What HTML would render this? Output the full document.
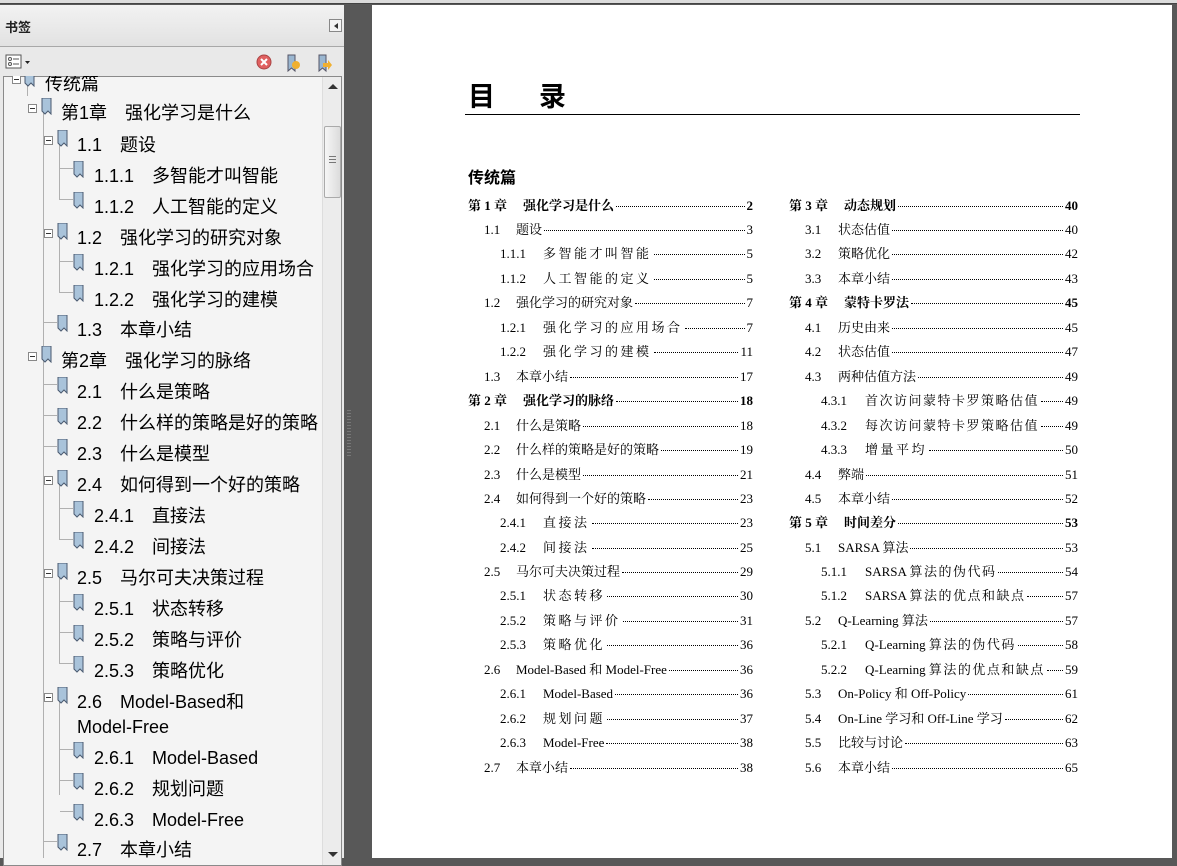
<!DOCTYPE html>
<html><head><meta charset="utf-8"><style>
*{margin:0;padding:0;box-sizing:border-box}
body{width:1177px;height:858px;overflow:hidden;background:#585858;position:relative;font-family:"Liberation Sans","Noto Sans CJK SC",sans-serif}
#top{position:absolute;left:0;top:0;width:1177px;height:4px;background:#dcdcdc;border-bottom:1px solid #444}
#panel{position:absolute;left:0;top:5px;width:344px;height:853px;background:#e9e9e9}
#hdr{position:absolute;left:0;top:0;width:344px;height:42px;background:linear-gradient(#f2f2f2,#e2e2e2);border-bottom:1px solid #a8a8a8}
#hdr b{position:absolute;left:5px;top:12px;font-size:13px;color:#222;font-family:"Noto Sans CJK SC",sans-serif}
#coll{position:absolute;left:329px;top:14px;width:13px;height:13px;border:1px solid #888;background:#f4f4f4}
#coll:after{content:"";position:absolute;left:4px;top:3px;border-right:4px solid #333;border-top:3px solid transparent;border-bottom:3px solid transparent}
#tree{position:absolute;left:3px;top:71px;width:339px;height:790px;background:#f4f4f4;border:1px solid #8a8a8a;overflow:hidden}
#sb{position:absolute;right:0;top:0;width:19px;height:100%;background:#ececec;border-left:1px solid #ddd}
#thumb{position:absolute;left:1px;top:49px;width:17px;height:72px;background:linear-gradient(90deg,#f6f6f6,#dcdcdc);border:1px solid #aaa;border-radius:2px}
.it{position:absolute;font-size:18px;color:#000;white-space:nowrap;line-height:24px}
.bm{position:absolute;width:11px;height:17px}
.mn{position:absolute;width:9px;height:9px;border:1px solid #888;background:#fff}
.mn:after{content:"";position:absolute;left:1px;top:3px;width:5px;height:1px;background:#333}
.vl{position:absolute;width:1px;background:#b0b0b0}
.hl{position:absolute;height:1px;background:#b0b0b0}
#gap{position:absolute;left:344px;top:5px;width:28px;height:853px;background:#585858}
#page{position:absolute;left:372px;top:5px;width:800px;height:853px;background:#fff}
.r{position:absolute;display:flex;align-items:baseline;font-family:"Liberation Serif","Noto Serif CJK SC",serif;font-size:13px;color:#000;white-space:nowrap;line-height:18px}
.r .d{flex:1;border-bottom:1px dotted #000;margin:0 2px;height:1px;position:relative;top:-3px}
.r .n{display:inline-block}
.ch{font-weight:bold}
.ss .t{letter-spacing:2.5px}
</style></head><body>
<div id="top"></div>
<div id="panel">
<div id="hdr"><b>书签</b><div id="coll"></div></div>
<svg style="position:absolute;left:5px;top:49px" width="28" height="16"><rect x="1" y="1" width="15" height="13" fill="#fff" stroke="#555"/><circle cx="5" cy="5" r="1.5" fill="none" stroke="#555"/><circle cx="5" cy="10" r="1.5" fill="none" stroke="#555"/><path d="M8 5h6M8 10h6" stroke="#555"/><path d="M20 7h5l-2.5 3z" fill="#222"/></svg>
<svg style="position:absolute;left:256px;top:48px" width="80" height="20"><circle cx="8" cy="9" r="7" fill="#e06060" stroke="#a44"/><path d="M5 6l6 6M11 6l-6 6" stroke="#fff" stroke-width="2"/><path d="M32 2h7v16l-3.5-3-3.5 3z" fill="#9ab6d0" stroke="#556"/><circle cx="40" cy="12" r="4" fill="#f0b030"/><path d="M63 2h7v16l-3.5-3-3.5 3z" fill="#9ab6d0" stroke="#556"/><path d="M67 10h5v-3l4 5-4 5v-3h-5z" fill="#f0b030"/></svg>
<div id="tree">
<div id="sb"><div style="position:absolute;left:5px;top:7px;border-bottom:5px solid #333;border-left:5px solid transparent;border-right:5px solid transparent"></div><div id="thumb"><div style="position:absolute;left:4px;top:29px;width:7px;height:7px;border-top:1px solid #777;border-bottom:1px solid #777"></div><div style="position:absolute;left:4px;top:32px;width:7px;height:1px;background:#777"></div></div><div style="position:absolute;left:5px;bottom:8px;border-top:5px solid #333;border-left:5px solid transparent;border-right:5px solid transparent"></div></div>
</div>
</div>
<div id="gap"><div style="position:absolute;left:3px;top:405px;width:4px;height:48px;background:repeating-linear-gradient(#777 0 1px,#585858 1px 3px)"></div></div>
<div id="page">
<div style="position:absolute;left:96px;top:70px;font-size:27px;font-weight:bold;font-family:'Noto Sans CJK SC',sans-serif;letter-spacing:44px">目录</div>
<div style="position:absolute;left:93px;top:109px;width:615px;height:1px;background:#000"></div>
<div style="position:absolute;left:96px;top:159px;font-size:16px;font-weight:bold;font-family:'Noto Sans CJK SC',sans-serif">传统篇</div>
</div>
<div id="toc"></div>

<!-- tree items -->
<div id="ti" style="position:absolute;left:3px;top:76px;width:318px;height:782px;overflow:hidden">
<div class="vl" style="left:24px;top:0;height:20px"></div>
<div class="vl" style="left:40px;top:30px;height:254px"></div>
<div class="vl" style="left:56px;top:62px;height:62px"></div>
<div class="vl" style="left:56px;top:155px;height:62px"></div>
<div class="vl" style="left:40px;top:285px;height:500px"></div>
<div class="vl" style="left:56px;top:402px;height:62px"></div>
<div class="vl" style="left:56px;top:495px;height:93px"></div>
<div class="vl" style="left:56px;top:626px;height:93px"></div>
</div>
<script></script>
<div style="position:absolute;left:3px;top:76px;width:318px;height:782px;overflow:hidden">
<div class="mn" style="left:9px;top:-1px"></div><svg class="bm" style="left:21px;top:-6px"><path d="M1 0h9v16l-3-3-3 3-3-3z" fill="#a9c3da" stroke="#4a5a70"/></svg><div class="it" style="left:42px;top:-4px">传统篇</div>
<div class="mn" style="left:25px;top:28px"></div><svg class="bm" style="left:38px;top:22px"><path d="M1 0h9v16l-3-3-3 3-3-3z" fill="#a9c3da" stroke="#4a5a70"/></svg><div class="it" style="left:58px;top:25px">第1章　强化学习是什么</div>
<div class="mn" style="left:41px;top:60px"></div><svg class="bm" style="left:54px;top:54px"><path d="M1 0h9v16l-3-3-3 3-3-3z" fill="#a9c3da" stroke="#4a5a70"/></svg><div class="it" style="left:74px;top:57px">1.1　题设</div>
<div class="hl" style="left:57px;top:92px;width:13px"></div><svg class="bm" style="left:70px;top:85px"><path d="M1 0h9v16l-3-3-3 3-3-3z" fill="#a9c3da" stroke="#4a5a70"/></svg><div class="it" style="left:91px;top:88px">1.1.1　多智能才叫智能</div>
<div class="hl" style="left:57px;top:123px;width:13px"></div><svg class="bm" style="left:70px;top:116px"><path d="M1 0h9v16l-3-3-3 3-3-3z" fill="#a9c3da" stroke="#4a5a70"/></svg><div class="it" style="left:91px;top:119px">1.1.2　人工智能的定义</div>
<div class="mn" style="left:41px;top:153px"></div><svg class="bm" style="left:54px;top:147px"><path d="M1 0h9v16l-3-3-3 3-3-3z" fill="#a9c3da" stroke="#4a5a70"/></svg><div class="it" style="left:74px;top:150px">1.2　强化学习的研究对象</div>
<div class="hl" style="left:57px;top:185px;width:13px"></div><svg class="bm" style="left:70px;top:178px"><path d="M1 0h9v16l-3-3-3 3-3-3z" fill="#a9c3da" stroke="#4a5a70"/></svg><div class="it" style="left:91px;top:181px">1.2.1　强化学习的应用场合</div>
<div class="hl" style="left:57px;top:216px;width:13px"></div><svg class="bm" style="left:70px;top:209px"><path d="M1 0h9v16l-3-3-3 3-3-3z" fill="#a9c3da" stroke="#4a5a70"/></svg><div class="it" style="left:91px;top:212px">1.2.2　强化学习的建模</div>
<div class="hl" style="left:41px;top:246px;width:13px"></div><svg class="bm" style="left:54px;top:239px"><path d="M1 0h9v16l-3-3-3 3-3-3z" fill="#a9c3da" stroke="#4a5a70"/></svg><div class="it" style="left:74px;top:242px">1.3　本章小结</div>
<div class="mn" style="left:25px;top:276px"></div><svg class="bm" style="left:38px;top:270px"><path d="M1 0h9v16l-3-3-3 3-3-3z" fill="#a9c3da" stroke="#4a5a70"/></svg><div class="it" style="left:58px;top:273px">第2章　强化学习的脉络</div>
<div class="hl" style="left:41px;top:308px;width:13px"></div><svg class="bm" style="left:54px;top:301px"><path d="M1 0h9v16l-3-3-3 3-3-3z" fill="#a9c3da" stroke="#4a5a70"/></svg><div class="it" style="left:74px;top:304px">2.1　什么是策略</div>
<div class="hl" style="left:41px;top:339px;width:13px"></div><svg class="bm" style="left:54px;top:332px"><path d="M1 0h9v16l-3-3-3 3-3-3z" fill="#a9c3da" stroke="#4a5a70"/></svg><div class="it" style="left:74px;top:335px">2.2　什么样的策略是好的策略</div>
<div class="hl" style="left:41px;top:370px;width:13px"></div><svg class="bm" style="left:54px;top:363px"><path d="M1 0h9v16l-3-3-3 3-3-3z" fill="#a9c3da" stroke="#4a5a70"/></svg><div class="it" style="left:74px;top:366px">2.3　什么是模型</div>
<div class="mn" style="left:41px;top:400px"></div><svg class="bm" style="left:54px;top:394px"><path d="M1 0h9v16l-3-3-3 3-3-3z" fill="#a9c3da" stroke="#4a5a70"/></svg><div class="it" style="left:74px;top:397px">2.4　如何得到一个好的策略</div>
<div class="hl" style="left:57px;top:432px;width:13px"></div><svg class="bm" style="left:70px;top:425px"><path d="M1 0h9v16l-3-3-3 3-3-3z" fill="#a9c3da" stroke="#4a5a70"/></svg><div class="it" style="left:91px;top:428px">2.4.1　直接法</div>
<div class="hl" style="left:57px;top:463px;width:13px"></div><svg class="bm" style="left:70px;top:456px"><path d="M1 0h9v16l-3-3-3 3-3-3z" fill="#a9c3da" stroke="#4a5a70"/></svg><div class="it" style="left:91px;top:459px">2.4.2　间接法</div>
<div class="mn" style="left:41px;top:493px"></div><svg class="bm" style="left:54px;top:487px"><path d="M1 0h9v16l-3-3-3 3-3-3z" fill="#a9c3da" stroke="#4a5a70"/></svg><div class="it" style="left:74px;top:490px">2.5　马尔可夫决策过程</div>
<div class="hl" style="left:57px;top:525px;width:13px"></div><svg class="bm" style="left:70px;top:518px"><path d="M1 0h9v16l-3-3-3 3-3-3z" fill="#a9c3da" stroke="#4a5a70"/></svg><div class="it" style="left:91px;top:521px">2.5.1　状态转移</div>
<div class="hl" style="left:57px;top:556px;width:13px"></div><svg class="bm" style="left:70px;top:549px"><path d="M1 0h9v16l-3-3-3 3-3-3z" fill="#a9c3da" stroke="#4a5a70"/></svg><div class="it" style="left:91px;top:552px">2.5.2　策略与评价</div>
<div class="hl" style="left:57px;top:587px;width:13px"></div><svg class="bm" style="left:70px;top:580px"><path d="M1 0h9v16l-3-3-3 3-3-3z" fill="#a9c3da" stroke="#4a5a70"/></svg><div class="it" style="left:91px;top:583px">2.5.3　策略优化</div>
<div class="mn" style="left:41px;top:617px"></div><svg class="bm" style="left:54px;top:611px"><path d="M1 0h9v16l-3-3-3 3-3-3z" fill="#a9c3da" stroke="#4a5a70"/></svg><div class="it" style="left:74px;top:614px">2.6　Model-Based和</div><div class="it" style="left:74px;top:639px">Model-Free</div>
<div class="hl" style="left:57px;top:673px;width:13px"></div><svg class="bm" style="left:70px;top:666px"><path d="M1 0h9v16l-3-3-3 3-3-3z" fill="#a9c3da" stroke="#4a5a70"/></svg><div class="it" style="left:91px;top:670px">2.6.1　Model-Based</div>
<div class="hl" style="left:57px;top:704px;width:13px"></div><svg class="bm" style="left:70px;top:697px"><path d="M1 0h9v16l-3-3-3 3-3-3z" fill="#a9c3da" stroke="#4a5a70"/></svg><div class="it" style="left:91px;top:701px">2.6.2　规划问题</div>
<div class="hl" style="left:57px;top:735px;width:13px"></div><svg class="bm" style="left:70px;top:728px"><path d="M1 0h9v16l-3-3-3 3-3-3z" fill="#a9c3da" stroke="#4a5a70"/></svg><div class="it" style="left:91px;top:732px">2.6.3　Model-Free</div>
<div class="hl" style="left:41px;top:765px;width:13px"></div><svg class="bm" style="left:54px;top:758px"><path d="M1 0h9v16l-3-3-3 3-3-3z" fill="#a9c3da" stroke="#4a5a70"/></svg><div class="it" style="left:74px;top:762px">2.7　本章小结</div>
</div>

<!-- TOC left column -->
<div class="r ch" style="left:468px;top:197px;width:285px"><span class="n" style="width:55px">第 1 章</span><span class="t">强化学习是什么</span><span class="d"></span><span>2</span></div>
<div class="r" style="left:484px;top:221px;width:269px"><span class="n" style="width:32px">1.1</span><span class="t">题设</span><span class="d"></span><span>3</span></div>
<div class="r ss" style="left:500px;top:245px;width:253px"><span class="n" style="width:43px">1.1.1</span><span class="t">多智能才叫智能</span><span class="d"></span><span>5</span></div>
<div class="r ss" style="left:500px;top:270px;width:253px"><span class="n" style="width:43px">1.1.2</span><span class="t">人工智能的定义</span><span class="d"></span><span>5</span></div>
<div class="r" style="left:484px;top:294px;width:269px"><span class="n" style="width:32px">1.2</span><span class="t">强化学习的研究对象</span><span class="d"></span><span>7</span></div>
<div class="r ss" style="left:500px;top:319px;width:253px"><span class="n" style="width:43px">1.2.1</span><span class="t">强化学习的应用场合</span><span class="d"></span><span>7</span></div>
<div class="r ss" style="left:500px;top:343px;width:253px"><span class="n" style="width:43px">1.2.2</span><span class="t">强化学习的建模</span><span class="d"></span><span>11</span></div>
<div class="r" style="left:484px;top:368px;width:269px"><span class="n" style="width:32px">1.3</span><span class="t">本章小结</span><span class="d"></span><span>17</span></div>
<div class="r ch" style="left:468px;top:392px;width:285px"><span class="n" style="width:55px">第 2 章</span><span class="t">强化学习的脉络</span><span class="d"></span><span>18</span></div>
<div class="r" style="left:484px;top:417px;width:269px"><span class="n" style="width:32px">2.1</span><span class="t">什么是策略</span><span class="d"></span><span>18</span></div>
<div class="r" style="left:484px;top:441px;width:269px"><span class="n" style="width:32px">2.2</span><span class="t">什么样的策略是好的策略</span><span class="d"></span><span>19</span></div>
<div class="r" style="left:484px;top:466px;width:269px"><span class="n" style="width:32px">2.3</span><span class="t">什么是模型</span><span class="d"></span><span>21</span></div>
<div class="r" style="left:484px;top:490px;width:269px"><span class="n" style="width:32px">2.4</span><span class="t">如何得到一个好的策略</span><span class="d"></span><span>23</span></div>
<div class="r ss" style="left:500px;top:514px;width:253px"><span class="n" style="width:43px">2.4.1</span><span class="t">直接法</span><span class="d"></span><span>23</span></div>
<div class="r ss" style="left:500px;top:539px;width:253px"><span class="n" style="width:43px">2.4.2</span><span class="t">间接法</span><span class="d"></span><span>25</span></div>
<div class="r" style="left:484px;top:563px;width:269px"><span class="n" style="width:32px">2.5</span><span class="t">马尔可夫决策过程</span><span class="d"></span><span>29</span></div>
<div class="r ss" style="left:500px;top:587px;width:253px"><span class="n" style="width:43px">2.5.1</span><span class="t">状态转移</span><span class="d"></span><span>30</span></div>
<div class="r ss" style="left:500px;top:612px;width:253px"><span class="n" style="width:43px">2.5.2</span><span class="t">策略与评价</span><span class="d"></span><span>31</span></div>
<div class="r ss" style="left:500px;top:636px;width:253px"><span class="n" style="width:43px">2.5.3</span><span class="t">策略优化</span><span class="d"></span><span>36</span></div>
<div class="r" style="left:484px;top:661px;width:269px"><span class="n" style="width:32px">2.6</span><span class="t">Model-Based 和 Model-Free</span><span class="d"></span><span>36</span></div>
<div class="r" style="left:500px;top:685px;width:253px"><span class="n" style="width:43px">2.6.1</span><span class="t">Model-Based</span><span class="d"></span><span>36</span></div>
<div class="r ss" style="left:500px;top:710px;width:253px"><span class="n" style="width:43px">2.6.2</span><span class="t">规划问题</span><span class="d"></span><span>37</span></div>
<div class="r" style="left:500px;top:734px;width:253px"><span class="n" style="width:43px">2.6.3</span><span class="t">Model-Free</span><span class="d"></span><span>38</span></div>
<div class="r" style="left:484px;top:759px;width:269px"><span class="n" style="width:32px">2.7</span><span class="t">本章小结</span><span class="d"></span><span>38</span></div>

<!-- TOC right column -->
<div class="r ch" style="left:789px;top:197px;width:289px"><span class="n" style="width:55px">第 3 章</span><span class="t">动态规划</span><span class="d"></span><span>40</span></div>
<div class="r" style="left:805px;top:221px;width:273px"><span class="n" style="width:33px">3.1</span><span class="t">状态估值</span><span class="d"></span><span>40</span></div>
<div class="r" style="left:805px;top:245px;width:273px"><span class="n" style="width:33px">3.2</span><span class="t">策略优化</span><span class="d"></span><span>42</span></div>
<div class="r" style="left:805px;top:270px;width:273px"><span class="n" style="width:33px">3.3</span><span class="t">本章小结</span><span class="d"></span><span>43</span></div>
<div class="r ch" style="left:789px;top:294px;width:289px"><span class="n" style="width:55px">第 4 章</span><span class="t">蒙特卡罗法</span><span class="d"></span><span>45</span></div>
<div class="r" style="left:805px;top:319px;width:273px"><span class="n" style="width:33px">4.1</span><span class="t">历史由来</span><span class="d"></span><span>45</span></div>
<div class="r" style="left:805px;top:343px;width:273px"><span class="n" style="width:33px">4.2</span><span class="t">状态估值</span><span class="d"></span><span>47</span></div>
<div class="r" style="left:805px;top:368px;width:273px"><span class="n" style="width:33px">4.3</span><span class="t">两种估值方法</span><span class="d"></span><span>49</span></div>
<div class="r ss" style="left:821px;top:392px;width:257px"><span class="n" style="width:44px">4.3.1</span><span class="t" style="letter-spacing:1.5px">首次访问蒙特卡罗策略估值</span><span class="d"></span><span>49</span></div>
<div class="r ss" style="left:821px;top:417px;width:257px"><span class="n" style="width:44px">4.3.2</span><span class="t" style="letter-spacing:1.5px">每次访问蒙特卡罗策略估值</span><span class="d"></span><span>49</span></div>
<div class="r ss" style="left:821px;top:441px;width:257px"><span class="n" style="width:44px">4.3.3</span><span class="t">增量平均</span><span class="d"></span><span>50</span></div>
<div class="r" style="left:805px;top:466px;width:273px"><span class="n" style="width:33px">4.4</span><span class="t">弊端</span><span class="d"></span><span>51</span></div>
<div class="r" style="left:805px;top:490px;width:273px"><span class="n" style="width:33px">4.5</span><span class="t">本章小结</span><span class="d"></span><span>52</span></div>
<div class="r ch" style="left:789px;top:514px;width:289px"><span class="n" style="width:55px">第 5 章</span><span class="t">时间差分</span><span class="d"></span><span>53</span></div>
<div class="r" style="left:805px;top:539px;width:273px"><span class="n" style="width:33px">5.1</span><span class="t">SARSA 算法</span><span class="d"></span><span>53</span></div>
<div class="r" style="left:821px;top:563px;width:257px"><span class="n" style="width:44px">5.1.1</span><span class="t">SARSA <span style="letter-spacing:1.5px">算法的伪代码</span></span><span class="d"></span><span>54</span></div>
<div class="r" style="left:821px;top:587px;width:257px"><span class="n" style="width:44px">5.1.2</span><span class="t">SARSA <span style="letter-spacing:1.5px">算法的优点和缺点</span></span><span class="d"></span><span>57</span></div>
<div class="r" style="left:805px;top:612px;width:273px"><span class="n" style="width:33px">5.2</span><span class="t">Q-Learning 算法</span><span class="d"></span><span>57</span></div>
<div class="r" style="left:821px;top:636px;width:257px"><span class="n" style="width:44px">5.2.1</span><span class="t">Q-Learning <span style="letter-spacing:1.5px">算法的伪代码</span></span><span class="d"></span><span>58</span></div>
<div class="r" style="left:821px;top:661px;width:257px"><span class="n" style="width:44px">5.2.2</span><span class="t">Q-Learning <span style="letter-spacing:1.5px">算法的优点和缺点</span></span><span class="d"></span><span>59</span></div>
<div class="r" style="left:805px;top:685px;width:273px"><span class="n" style="width:33px">5.3</span><span class="t">On-Policy 和 Off-Policy</span><span class="d"></span><span>61</span></div>
<div class="r" style="left:805px;top:710px;width:273px"><span class="n" style="width:33px">5.4</span><span class="t">On-Line 学习和 Off-Line 学习</span><span class="d"></span><span>62</span></div>
<div class="r" style="left:805px;top:734px;width:273px"><span class="n" style="width:33px">5.5</span><span class="t">比较与讨论</span><span class="d"></span><span>63</span></div>
<div class="r" style="left:805px;top:759px;width:273px"><span class="n" style="width:33px">5.6</span><span class="t">本章小结</span><span class="d"></span><span>65</span></div>
</body></html>
